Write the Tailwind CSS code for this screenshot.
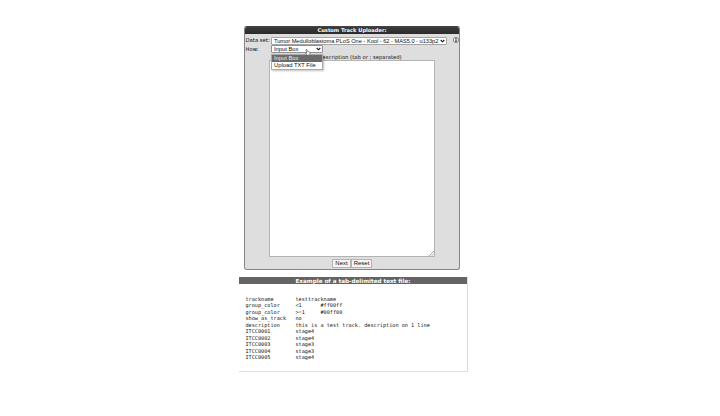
<!DOCTYPE html>
<html lang="en">
<head>
<meta charset="utf-8">
<title>Custom Track Uploader</title>
<script src="https://cdn.jsdelivr.net/npm/@tailwindcss/browser@4"></script>
</head>
<body class="bg-white w-[720px] h-[416px] overflow-hidden pt-[26px] pl-[239px] text-[#111]">
<section class="ml-[5px] w-[216px] h-[244px] flex flex-col rounded-[3px] border border-[#858585] border-t-[#444] bg-[#dedede] font-['DejaVu_Sans',sans-serif] text-[5.15px]">
  <h1 class="h-[7px] rounded-t-[2px] bg-gradient-to-b from-[#3c3c3c] to-[#2b2b2b] text-center leading-[7px] text-[5.15px] font-bold text-white"><span class="whitespace-nowrap">Custom Track Uploader:</span></h1>
  <div class="flex h-[9px] mt-[2px] items-center">
    <label class="w-[26px] h-[8px] leading-[7px] pl-[0.5px] text-[5.3px] whitespace-nowrap">Data set:</label>
    <div class="w-[176px] h-[8px] flex items-center justify-between rounded-[1px] border border-[#a5a5a5] bg-white pl-[2px] pr-[1px] font-['Liberation_Sans',sans-serif] text-[5.65px] leading-[6px] whitespace-nowrap">
      <span>Tumor Medulloblastoma PLoS One - Kool - 62 - MAS5.0 - u133p2</span>
      <svg class="w-[5px] h-[4px]" viewBox="0 0 5 4" fill="none" stroke="#111" stroke-width="1.1"><path d="M.7 1 2.5 2.8 4.3 1"/></svg>
    </div>
    <svg class="ml-[5.5px] mb-[1px] w-[6px] h-[6px]" viewBox="0 0 6 6"><circle cx="3" cy="3" r="2.6" fill="#f2f2f2" stroke="#444" stroke-width=".6"/><path d="M3 1v.8M3 2.3v2.7" fill="none" stroke="#111" stroke-width="1"/></svg>
  </div>
  <div class="flex h-[9px] items-start relative">
    <label class="w-[26px] h-[8px] leading-[8px] pl-[0.5px] text-[5.3px]">How:</label>
    <div class="w-[52px] h-[8px] flex items-center justify-between rounded-[1px] border border-[#909090] bg-white pl-[2px] pr-[1px] font-['Liberation_Sans',sans-serif] text-[5.8px] leading-[6px]">
      <span>Input Box</span>
      <svg class="w-[5px] h-[4px]" viewBox="0 0 5 4" fill="none" stroke="#111" stroke-width="1.1"><path d="M.7 1 2.5 2.8 4.3 1"/></svg>
    </div>
    <div class="absolute z-10 left-[26px] top-[9px] w-[52px] h-[16px] border border-[#aaa] bg-white font-['Liberation_Sans',sans-serif] text-[5.8px] leading-[7px] shadow-[1px_1px_2px_rgba(0,0,0,0.25)]">
      <div class="h-[7px] pl-[2px] bg-[#6b6b6b] text-[#e8e8e8]">Input Box</div>
      <div class="h-[7px] pl-[2px] whitespace-nowrap">Upload TXT File</div>
    </div>
    <svg class="absolute z-20 left-[60px] top-[4px] w-[6px] h-[7px]" viewBox="0 0 6 7"><path d="M1 .5c.5-.3.9 0 1 .4l.4 1.4 2 .7c.6.2.7.6.6 1.2l-.5 2H2.3L.7 4.5c0-.5.5-.6 1-.3Z" fill="#fff" stroke="#444" stroke-width=".6"/></svg>
  </div>
  <p class="h-[6px] pl-[77.5px] leading-[6px] text-[5.27px] whitespace-nowrap">escription (tab or ; separated)</p>
  <div class="relative ml-[24px] w-[166px] h-[197px] shrink-0 border border-[#b4b4b4] bg-white">
    <svg class="absolute right-0 bottom-0 w-[5px] h-[5px]" viewBox="0 0 5 5" fill="none" stroke="#777" stroke-width=".6"><path d="M0 5 5 0M2.5 5 5 2.5"/></svg>
  </div>
  <div class="mt-[2px] ml-[87px] flex font-['Liberation_Sans',sans-serif] text-[6px] leading-[7px]">
    <button class="w-[19px] h-[9px] border border-[#b4b4b4] bg-[#f5f5f5]">Next</button>
    <button class="w-[21px] h-[9px] border border-[#b4b4b4] bg-[#f5f5f5]">Reset</button>
  </div>
</section>
<section class="mt-[7px] w-[229px] h-[95px] border-r border-b border-[#ddd]">
  <h2 class="h-[7px] bg-[#646464] text-center font-['DejaVu_Sans',sans-serif] text-[5.65px] leading-[8px] font-bold text-white whitespace-nowrap">Example of a tab-delimited text file:</h2>
  <pre class="mt-[11.6px] ml-[6.5px] [tab-size:8] font-['DejaVu_Sans_Mono',monospace] text-[5.2px] leading-[6.5px]">trackname	testtrackname
group_color	&lt;1	#ff00ff
group_color	&gt;=1	#00ff00
show_as_track	no
description	this is a test track. description on 1 line
ITCC0001	stage4
ITCC0002	stage4
ITCC0003	stage3
ITCC0004	stage3
ITCC0005	stage4</pre>
</section>
</body>
</html>
